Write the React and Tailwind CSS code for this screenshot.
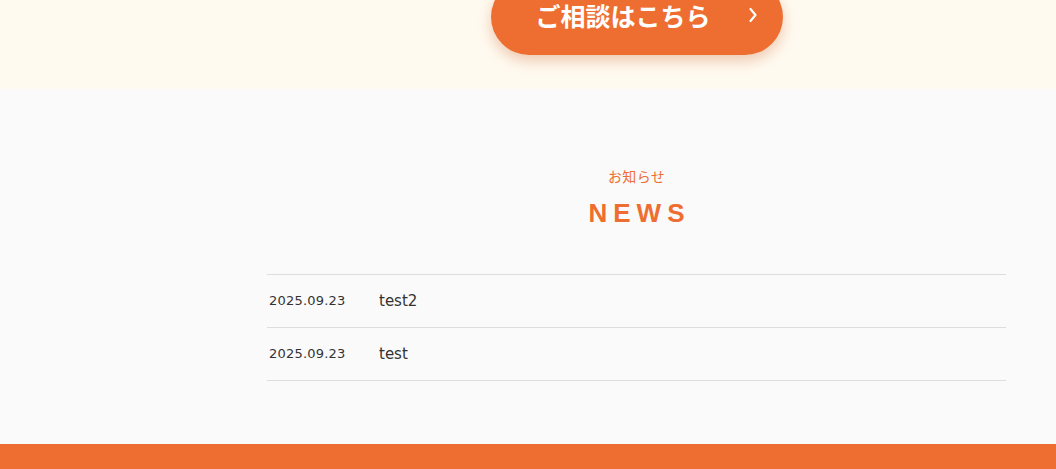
export default function App() {
  return (
    <div className="min-h-[469px] w-[1056px] overflow-hidden bg-[#fafafa] font-['DejaVu_Sans','Noto_Sans_CJK_JP',sans-serif]">
      <section className="h-[89px] bg-[#fffaf0] flex">
        <div className="w-[267px] shrink-0" />
        <div className="w-[739px] flex justify-center">
          <a className="-mt-[21px] h-[76px] w-[292px] rounded-full bg-[#ee6e31] shadow-[0_6px_14px_rgba(200,90,30,0.3)] flex items-center relative text-white">
            <span className="flex-1 text-center pr-[27px] pb-[4px] text-[25px] font-bold font-['Noto_Sans_CJK_JP',sans-serif] leading-none">ご相談はこちら</span>
            <svg className="absolute left-[257px] top-[27px]" width="10" height="18" viewBox="0 0 10 18" fill="none" stroke="white" strokeWidth="2.2" strokeLinecap="round" strokeLinejoin="round">
              <path d="M2.5 3 L7.5 9 L2.5 15" />
            </svg>
          </a>
        </div>
      </section>
      <section className="flex pt-[77px] pb-[63px]">
        <div className="w-[267px] shrink-0" />
        <div className="w-[739px]">
          <p className="text-center text-[14px] text-[#ee6e31] font-['Noto_Sans_CJK_JP',sans-serif] leading-[20px] tracking-[0.02em]">お知らせ</p>
          <h2 className="mt-[11px] text-center text-[26px] font-bold text-[#ee6e31] tracking-[6px] leading-[32px] pl-[6px] font-['Liberation_Sans',sans-serif]">NEWS</h2>
          <ul className="mt-[45px] border-t border-[#dddddd]">
            <li className="h-[53px] flex items-center border-b border-[#dddddd] text-[#333]">
              <span className="w-[112px] pl-[2px] text-[13px] tracking-[0.2px]">2025.09.23</span>
              <span className="text-[15px]">test2</span>
            </li>
            <li className="h-[53px] flex items-center border-b border-[#dddddd] text-[#333]">
              <span className="w-[112px] pl-[2px] text-[13px] tracking-[0.2px]">2025.09.23</span>
              <span className="text-[15px]">test</span>
            </li>
          </ul>
        </div>
      </section>
      <footer className="h-[60px] bg-[#ee6e31]" />
    </div>
  );
}
